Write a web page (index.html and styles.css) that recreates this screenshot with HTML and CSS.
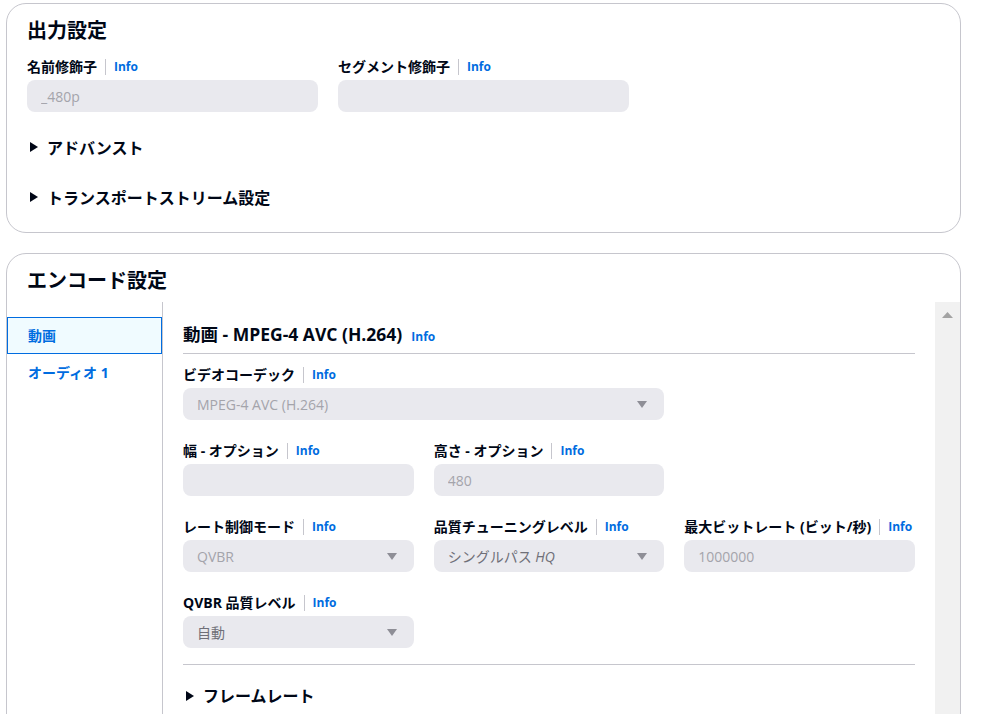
FILE: index.html
```html
<!DOCTYPE html>
<html lang="ja">
<head>
  <meta charset="utf-8">
  <title>出力設定</title>
  <link rel="stylesheet" href="styles.css">
</head>

<body>
  <main class="page">
    <section class="card">
      <h2 class="card__title">出力設定</h2>
      <div class="grid grid--top">
        <div class="field">
          <div class="field__label">名前修飾子<span class="field__sep"></span><a class="info" href="#">Info</a></div>
          <input class="input" type="text" placeholder="_480p">
        </div>
        <div class="field">
          <div class="field__label">セグメント修飾子<span class="field__sep"></span><a class="info" href="#">Info</a></div>
          <input class="input" type="text">
        </div>
      </div>
      <div class="expands">
        <div class="expand">
          <svg class="expand__icon" width="8" height="10" viewBox="0 0 8 10"><path d="M0 0L8 5L0 10Z"/></svg>
          アドバンスト
        </div>
        <div class="expand">
          <svg class="expand__icon" width="8" height="10" viewBox="0 0 8 10"><path d="M0 0L8 5L0 10Z"/></svg>
          トランスポートストリーム設定
        </div>
      </div>
    </section>

    <section class="card card--encode">
      <h2 class="card__title card__title--pad">エンコード設定</h2>
      <div class="encode">
        <nav class="tabs">
          <a class="tab tab--active" href="#">動画</a>
          <a class="tab" href="#">オーディオ 1</a>
        </nav>

        <div class="encode__content">
          <div class="section-head">
            動画 - MPEG-4 AVC (H.264)
            <a class="info info--head" href="#">Info</a>
          </div>

          <div class="grid grid--inner">
            <div class="field field--wide">
              <div class="field__label">ビデオコーデック<span class="field__sep"></span><a class="info" href="#">Info</a></div>
              <div class="select">
                <span>MPEG-4 AVC (H.264)</span>
                <svg class="select__arrow" width="10" height="7" viewBox="0 0 10 7"><path d="M0 0H10L5 7Z"/></svg>
              </div>
            </div>

            <div class="field field--first">
              <div class="field__label">幅 - オプション<span class="field__sep"></span><a class="info" href="#">Info</a></div>
              <input class="input" type="text">
            </div>
            <div class="field">
              <div class="field__label">高さ - オプション<span class="field__sep"></span><a class="info" href="#">Info</a></div>
              <input class="input" type="text" placeholder="480">
            </div>

            <div class="field field--first">
              <div class="field__label">レート制御モード<span class="field__sep"></span><a class="info" href="#">Info</a></div>
              <div class="select">
                <span>QVBR</span>
                <svg class="select__arrow" width="10" height="7" viewBox="0 0 10 7"><path d="M0 0H10L5 7Z"/></svg>
              </div>
            </div>
            <div class="field">
              <div class="field__label">品質チューニングレベル<span class="field__sep"></span><a class="info" href="#">Info</a></div>
              <div class="select select--value">
                <span>シングルパス <i>HQ</i></span>
                <svg class="select__arrow" width="10" height="7" viewBox="0 0 10 7"><path d="M0 0H10L5 7Z"/></svg>
              </div>
            </div>
            <div class="field">
              <div class="field__label">最大ビットレート (ビット/秒)<span class="field__sep"></span><a class="info" href="#">Info</a></div>
              <input class="input" type="text" placeholder="1000000">
            </div>

            <div class="field field--first">
              <div class="field__label">QVBR 品質レベル<span class="field__sep"></span><a class="info" href="#">Info</a></div>
              <div class="select select--value">
                <span>自動</span>
                <svg class="select__arrow" width="10" height="7" viewBox="0 0 10 7"><path d="M0 0H10L5 7Z"/></svg>
              </div>
            </div>
          </div>

          <div class="divider"></div>

          <div class="expand expand--inner">
            <svg class="expand__icon" width="8" height="10" viewBox="0 0 8 10"><path d="M0 0L8 5L0 10Z"/></svg>
            フレームレート
          </div>
        </div>

        <div class="rail">
          <svg class="rail__arrow" width="11" height="6" viewBox="0 0 11 6"><path d="M0 6L5.5 0L11 6Z"/></svg>
        </div>
      </div>
    </section>
  </main>
</body>

</html>
```

FILE: styles.css
```css
* {
  box-sizing: border-box;
}

html,
body {
  margin: 0;
  height: 100%;
  overflow: hidden;
}

body {
  font-family: "Open Sans", "Noto Sans CJK JP", sans-serif;
  font-size: 14px;
  color: #000716;
  background-color: #ffffff;
}

.page {
  padding: 3px 20px 0 6px;
}

.card {
  border: 1px solid #c6c6cd;
  border-radius: 20px;
  padding: 17px 20px 10px;
  background-color: #ffffff;
}

.card + .card {
  margin-top: 20px;
}

.card__title {
  margin: 0;
  font-size: 20px;
  line-height: 20px;
  font-weight: 700;
}

.grid {
  display: grid;
  grid-template-columns: repeat(3, 1fr);
  column-gap: 20px;
  row-gap: 18px;
}

.grid--top {
  margin-top: 13px;
}

.grid--inner {
  margin-top: 8px;
}

.field--wide {
  grid-column: 1 / span 2;
}

.field--first {
  grid-column: 1;
}

.field__label {
  display: flex;
  align-items: center;
  font-weight: 700;
  line-height: 24px;
  margin-bottom: 2px;
  padding-top: 1px;
  height: 24px;
  white-space: nowrap;
}

.field__sep {
  width: 1px;
  height: 16px;
  background-color: #c6c6cd;
  margin: 0 8px;
}

.info {
  color: #006ce0;
  font-size: 12px;
  font-weight: 700;
  text-decoration: none;
}

.input,
.select {
  display: flex;
  align-items: center;
  width: 100%;
  height: 32px;
  border: none;
  border-radius: 8px;
  background-color: #e9e9ee;
  padding: 0 14px;
  font-family: inherit;
  font-size: 14px;
  color: #a4a4ab;
}

.input::placeholder {
  color: #a4a4ab;
}

.select {
  justify-content: space-between;
  padding-right: 17px;
}

.select--value {
  color: #6f6f78;
}

.select__arrow {
  fill: #8e8e96;
}

.expands {
  margin-top: 10px;
}

.expand {
  display: flex;
  align-items: center;
  height: 50px;
  font-size: 16px;
  font-weight: 700;
}

.expand__icon {
  margin: 0 9px 0 3px;
  fill: #000716;
}

/* encode card */
.card--encode {
  padding: 17px 0 0;
}

.card__title--pad {
  padding: 0 20px;
  margin-bottom: 11px;
}

.encode {
  display: flex;
  min-height: 520px;
}

.tabs {
  width: 156px;
  flex-shrink: 0;
  border-right: 1px solid #c6c6cd;
  padding-top: 15px;
}

.tab {
  display: block;
  height: 37px;
  line-height: 35px;
  padding-left: 20px;
  border: 1px solid transparent;
  color: #006ce0;
  font-weight: 700;
  text-decoration: none;
}

.tab--active {
  border-color: #006ce0;
  background-color: #f0fbff;
}

.encode__content {
  flex: 1;
  padding: 20px 20px 0;
}

.section-head {
  display: flex;
  align-items: baseline;
  height: 32px;
  font-size: 17.5px;
  line-height: 24px;
  font-weight: 700;
  border-bottom: 1px solid #c6c6cd;
}

.info--head {
  margin-left: 9px;
}

.divider {
  border-top: 1px solid #c6c6cd;
  margin-top: 16px;
}

.expand--inner {
  height: auto;
  padding: 19px 0;
  line-height: 24px;
}

.rail {
  width: 25px;
  flex-shrink: 0;
  background-color: #f1f1f1;
  display: flex;
  justify-content: center;
  align-items: flex-start;
  padding-top: 10px;
}

.rail__arrow {
  fill: #a3a3a3;
}
```
